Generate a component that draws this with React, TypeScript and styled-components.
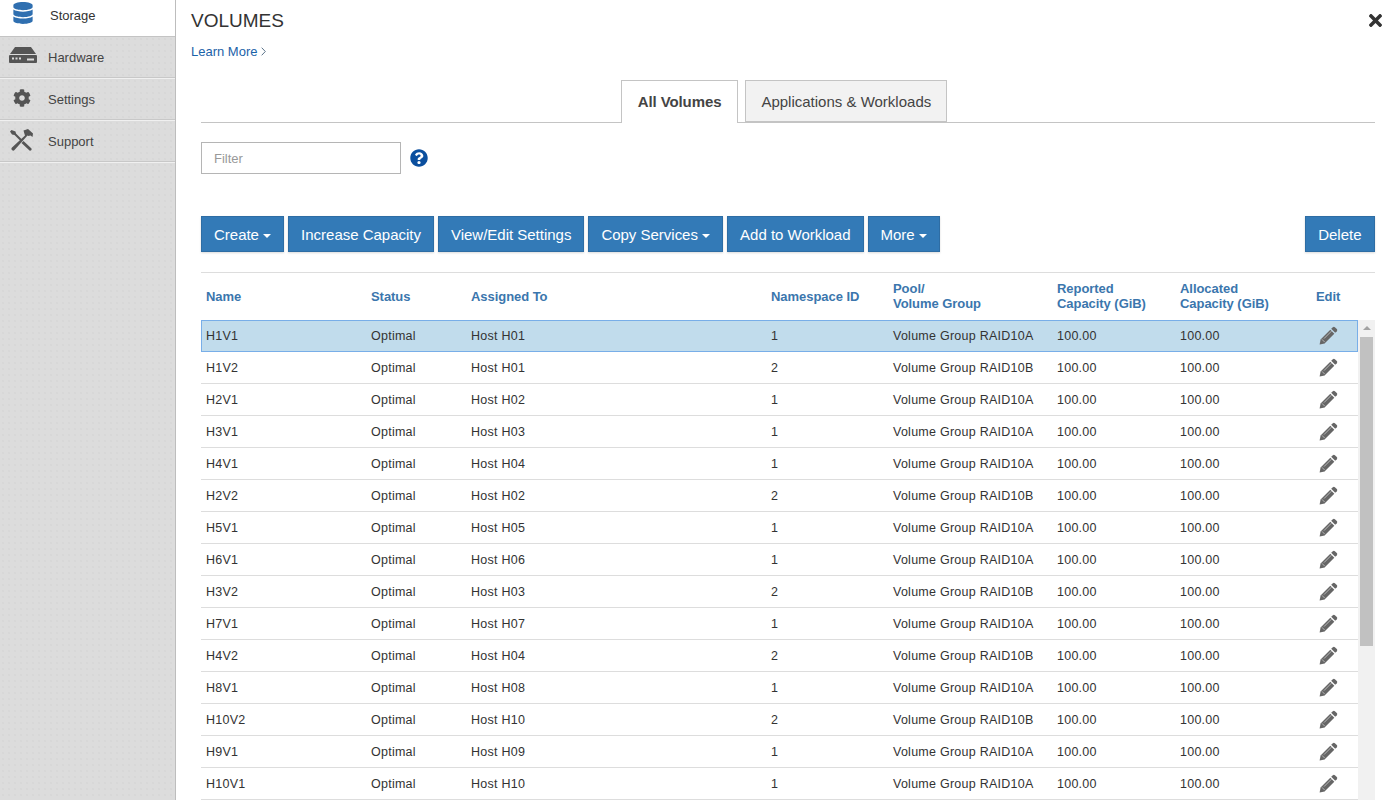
import styled, { createGlobalStyle } from 'styled-components';
import { FaCog, FaDatabase, FaQuestionCircle, FaTimes } from 'react-icons/fa';

const GlobalStyle = createGlobalStyle`
  html, body {
    margin: 0;
    padding: 0;
    height: 800px;
    overflow: hidden;
    background: #fff;
    font-family: 'Liberation Sans', Arial, sans-serif;
    color: #333;
  }
  * {
    box-sizing: border-box;
  }
`;

const Page = styled.div`
  display: flex;
  width: 1399px;
  height: 800px;
  overflow: hidden;
`;

const Sidebar = styled.nav`
  flex: 0 0 176px;
  height: 800px;
  border-right: 1px solid #bdbdbd;
  background-color: #dcdcdc;
  background-image: radial-gradient(#d2d2d2 0.6px, transparent 0.8px);
  background-size: 6px 6px;
`;

const NavItem = styled.div<{ $active?: boolean; $first?: boolean }>`
  display: flex;
  align-items: center;
  height: ${(p) => (p.$first ? '37px' : '42px')};
  padding-left: ${(p) => (p.$active ? '50px' : '48px')};
  padding-bottom: ${(p) => (p.$first ? '6px' : '0')};
  position: relative;
  font-size: 13px;
  color: ${(p) => (p.$active ? '#333' : '#444')};
  background: ${(p) => (p.$active ? '#fff' : 'transparent')};
  border-bottom: 1px solid ${(p) => (p.$active ? '#c4c4c4' : '#f0f0f0')};
  box-shadow: ${(p) => (p.$active ? 'none' : 'inset 0 -1px 0 #c8c8c8')};
`;

const NavIcon = styled.span<{ $left: number; $top: number; $color?: string }>`
  position: absolute;
  left: ${(p) => p.$left}px;
  top: ${(p) => p.$top}px;
  display: flex;
  color: ${(p) => p.$color || '#555'};
`;

const Main = styled.main`
  flex: 1;
  min-width: 0;
  position: relative;
  padding: 0 24px 0 15px;
`;

const Title = styled.h1`
  margin: 0;
  padding-top: 11px;
  font-size: 19px;
  line-height: 20px;
  font-weight: 400;
  color: #333;
`;

const CloseButton = styled.span`
  position: absolute;
  top: 11px;
  right: 14px;
  display: flex;
  color: #333;
`;

const LearnMore = styled.a`
  display: flex;
  align-items: center;
  gap: 4px;
  margin-top: 12px;
  height: 16px;
  font-size: 13px;
  color: #1b62a8;
`;

const Content = styled.div`
  margin-left: 10px;
`;

const Tabs = styled.div`
  display: flex;
  justify-content: center;
  gap: 7px;
  height: 43px;
  margin-top: 21px;
  padding-right: 8px;
  border-bottom: 1px solid #c4c4c4;
`;

const Tab = styled.div<{ $active?: boolean }>`
  display: flex;
  align-items: center;
  justify-content: center;
  height: ${(p) => (p.$active ? '43px' : '42px')};
  padding: ${(p) => (p.$active ? '0 16px 2px' : '0 15px')};
  font-size: 15px;
  font-weight: ${(p) => (p.$active ? 700 : 400)};
  letter-spacing: ${(p) => (p.$active ? '-0.1px' : '0')};
  color: #444;
  background: ${(p) => (p.$active ? '#fff' : '#f2f2f2')};
  border: 1px solid #c4c4c4;
  border-bottom: ${(p) => (p.$active ? '0' : '1px solid #c4c4c4')};
`;

const FilterRow = styled.div`
  display: flex;
  align-items: center;
  gap: 9px;
  margin-top: 19px;
`;

const FilterInput = styled.input`
  width: 200px;
  height: 32px;
  padding: 0 12px;
  border: 1px solid #b5b5b5;
  font-family: inherit;
  font-size: 13px;
  &::placeholder {
    color: #999;
  }
`;

const HelpIcon = styled.span`
  display: flex;
  color: #0b4f9e;
`;

const Toolbar = styled.div`
  display: flex;
  gap: 4px;
  margin-top: 42px;
`;

const ActionButton = styled.button<{ $push?: boolean }>`
  height: 36px;
  padding: 0 ${(p) => (p.$push ? '12.5px' : '12px')};
  margin-left: ${(p) => (p.$push ? 'auto' : '0')};
  border: 1px solid #2e6da4;
  background: #337ab7;
  color: #fff;
  font-family: inherit;
  font-size: 15px;
  letter-spacing: -0.012px;
  white-space: nowrap;
  box-shadow: 0 1px 2px rgba(0, 0, 0, 0.15);
`;

const Caret = styled.span`
  display: inline-block;
  vertical-align: middle;
  border-top: 4px solid #fff;
  border-left: 4px solid transparent;
  border-right: 4px solid transparent;
`;

const VolumeTable = styled.div`
  margin-top: 20px;
  border-top: 1px solid #ddd;
`;

const COLUMNS = '165px 100px 300px 122px 164px 123px 136px 47px';

const HeadRow = styled.div`
  display: grid;
  grid-template-columns: ${COLUMNS};
  height: 47px;
  padding: 0 17px 2px 0;
  align-items: center;
`;

const HeadCell = styled.div<{ $single?: boolean }>`
  padding-left: 5px;
  padding-top: ${(p) => (p.$single ? '1px' : '0')};
  font-size: 13px;
  line-height: 15px;
  font-weight: 700;
  letter-spacing: -0.05px;
  color: #3b76ad;
  white-space: nowrap;
`;

const BodyWrap = styled.div`
  display: flex;
`;

const Rows = styled.div`
  flex: 1;
  min-width: 0;
`;

const Row = styled.div<{ $selected?: boolean }>`
  display: grid;
  grid-template-columns: ${COLUMNS};
  align-items: center;
  height: 32px;
  font-size: 12.5px;
  border-bottom: 1px solid #ddd;
  background: ${(p) => (p.$selected ? '#c1dcec' : '#fff')};
  outline: ${(p) => (p.$selected ? '1px solid #78aee8' : 'none')};
  outline-offset: -1px;
`;

const Cell = styled.div`
  padding-left: 5px;
  letter-spacing: 0.25px;
  white-space: nowrap;
`;

const EditCell = styled.div`
  display: flex;
  padding-left: 8px;
  color: #666;
`;

const Scrollbar = styled.div`
  flex: 0 0 17px;
  position: relative;
  padding: 17px 2px 0;
  background: #f1f1f1;
`;

const ScrollArrow = styled.span`
  position: absolute;
  top: 6px;
  left: 5px;
  border-bottom: 4px solid #a3a3a3;
  border-left: 4px solid transparent;
  border-right: 4px solid transparent;
`;

const ScrollThumb = styled.div`
  height: 309px;
  background: #c1c1c1;
`;

const volumes = [
  ['H1V1', 'Host H01', '1', 'A'],
  ['H1V2', 'Host H01', '2', 'B'],
  ['H2V1', 'Host H02', '1', 'A'],
  ['H3V1', 'Host H03', '1', 'A'],
  ['H4V1', 'Host H04', '1', 'A'],
  ['H2V2', 'Host H02', '2', 'B'],
  ['H5V1', 'Host H05', '1', 'A'],
  ['H6V1', 'Host H06', '1', 'A'],
  ['H3V2', 'Host H03', '2', 'B'],
  ['H7V1', 'Host H07', '1', 'A'],
  ['H4V2', 'Host H04', '2', 'B'],
  ['H8V1', 'Host H08', '1', 'A'],
  ['H10V2', 'Host H10', '2', 'B'],
  ['H9V1', 'Host H09', '1', 'A'],
  ['H10V1', 'Host H10', '1', 'A'],
];

const HardwareIcon = () => (
  <svg width="28" height="16" viewBox="0 0 28 16">
    <path d="M6 0h16l5 7H1z" fill="#555" />
    <rect x="0" y="8" width="28" height="8" rx="1" fill="#555" />
    <rect x="3" y="10.500" width="2" height="2" fill="#ddd" />
    <rect x="6.500" y="10.500" width="2" height="2" fill="#ddd" />
    <rect x="10" y="10.500" width="2" height="2" fill="#ddd" />
    <rect x="18" y="11.500" width="7" height="2" fill="#ddd" />
  </svg>
);

const ToolsIcon = () => (
  <svg width="24" height="22" viewBox="0 0 24 22">
    <path d="M1.500 1 0 2.500l2 3 2.500.5 6.500 6.500 1.500-1.500L6 4.500 5.500 2.500z" fill="#555" />
    <path d="M13.500 12 21.500 19.500a1.500 1.500 0 0 1-2 2L11.500 14z" fill="#555" />
    <path d="M13.500 1.500 18 0l5 4.500-.5 3.500-2-1.500-2 .5-1-.5L4.500 21a1.700 1.700 0 0 1-2.500-2.500L15 6.500l-.5-1.500z" fill="#555" />
  </svg>
);

const PencilIcon = () => (
  <svg width="19" height="19" viewBox="0 0 19 19">
    <path d="M13.800 1.200a1.500 1.500 0 0 1 2.100 0l1.900 1.900a1.500 1.500 0 0 1 0 2.100l-1.600 1.600-4-4z" fill="currentColor" />
    <path d="M11.300 3.700l4 4-9.700 9.700L.6 18.400l1-5z" fill="currentColor" />
    <path d="M2.900 13.300l2.800 2.800M5 12.600l7.500-7.500" stroke="#fff" strokeOpacity="0.65" strokeWidth="0.8" fill="none" />
  </svg>
);

const ThinChevron = () => (
  <svg width="5" height="9" viewBox="0 0 5 9">
    <path d="M.7.7 4.300 4.500.7 8.300" stroke="#5a7288" strokeWidth="1" fill="none" />
  </svg>
);

const App = () => (
  <Page>
    <GlobalStyle />
    <Sidebar>
      <NavItem $active $first>
        <NavIcon $left={12} $top={2} $color="#2f6fb0">
          <FaDatabase size={22} />
        </NavIcon>
        Storage
      </NavItem>
      <NavItem>
        <NavIcon $left={9} $top={10}>
          <HardwareIcon />
        </NavIcon>
        Hardware
      </NavItem>
      <NavItem>
        <NavIcon $left={13} $top={10}>
          <FaCog size={18} />
        </NavIcon>
        Settings
      </NavItem>
      <NavItem>
        <NavIcon $left={10} $top={8}>
          <ToolsIcon />
        </NavIcon>
        Support
      </NavItem>
    </Sidebar>
    <Main>
      <Title>VOLUMES</Title>
      <CloseButton>
        <FaTimes size={19} />
      </CloseButton>
      <LearnMore>
        Learn More <ThinChevron />
      </LearnMore>
      <Content>
        <Tabs>
          <Tab $active>All Volumes</Tab>
          <Tab>Applications &amp; Workloads</Tab>
        </Tabs>
        <FilterRow>
          <FilterInput placeholder="Filter" />
          <HelpIcon>
            <FaQuestionCircle size={18} />
          </HelpIcon>
        </FilterRow>
        <Toolbar>
          <ActionButton>
            Create <Caret />
          </ActionButton>
          <ActionButton>Increase Capacity</ActionButton>
          <ActionButton>View/Edit Settings</ActionButton>
          <ActionButton>
            Copy Services <Caret />
          </ActionButton>
          <ActionButton>Add to Workload</ActionButton>
          <ActionButton>
            More <Caret />
          </ActionButton>
          <ActionButton $push>Delete</ActionButton>
        </Toolbar>
        <VolumeTable>
          <HeadRow>
            <HeadCell $single>Name</HeadCell>
            <HeadCell $single>Status</HeadCell>
            <HeadCell $single>Assigned To</HeadCell>
            <HeadCell $single>Namespace ID</HeadCell>
            <HeadCell>
              Pool/
              <br />
              Volume Group
            </HeadCell>
            <HeadCell>
              Reported
              <br />
              Capacity (GiB)
            </HeadCell>
            <HeadCell>
              Allocated
              <br />
              Capacity (GiB)
            </HeadCell>
            <HeadCell $single>Edit</HeadCell>
          </HeadRow>
          <BodyWrap>
            <Rows>
              {volumes.map(([name, host, ns, group], i) => (
                <Row key={name} $selected={i === 0}>
                  <Cell>{name}</Cell>
                  <Cell>Optimal</Cell>
                  <Cell>{host}</Cell>
                  <Cell>{ns}</Cell>
                  <Cell>Volume Group RAID10{group}</Cell>
                  <Cell>100.00</Cell>
                  <Cell>100.00</Cell>
                  <EditCell>
                    <PencilIcon />
                  </EditCell>
                </Row>
              ))}
            </Rows>
            <Scrollbar>
              <ScrollArrow />
              <ScrollThumb />
            </Scrollbar>
          </BodyWrap>
        </VolumeTable>
      </Content>
    </Main>
  </Page>
);

export default App;
